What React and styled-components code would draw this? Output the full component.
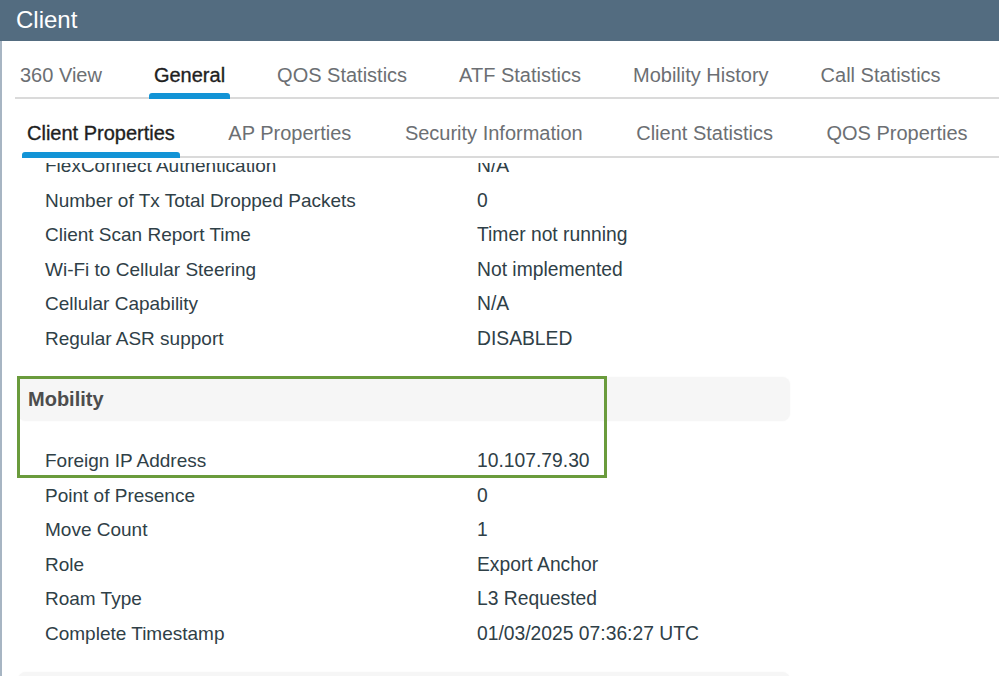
import React from 'react'
import styled, { createGlobalStyle } from 'styled-components'

const GlobalStyle = createGlobalStyle`
  html, body {
    margin: 0;
    padding: 0;
    background: #fff;
  }
  body {
    font-family: "Liberation Sans", Arial, sans-serif;
  }
`;

const Page = styled.div`
  display: flex;
  flex-direction: column;
  height: 676px;
  overflow: hidden;
`;

const TitleBar = styled.div`
  height: 41px;
  flex: none;
  display: flex;
  align-items: center;
  padding-left: 16px;
  background-color: #536c80;
  color: #fff;
  font-size: 24px;
  box-sizing: border-box;
  padding-bottom: 1px;
`;

const Body = styled.div`
  flex: 1;
  display: flex;
  flex-direction: column;
  min-height: 0;
  border-left: 2px solid #a7b5c3;
`;

const TabBar = styled.div`
  display: flex;
  flex: none;
  gap: ${p => p.$gap}px;
  height: ${p => p.$height}px;
  margin-left: ${p => p.$indent}px;
  border-bottom: 2px solid #dadada;
  box-sizing: border-box;
`;

const Tab = styled.div`
  position: relative;
  display: flex;
  align-items: center;
  padding: 12px 5px 0;
  font-size: 20px;
  white-space: nowrap;
  color: ${p => (p.$active ? '#1f1f1f' : '#6c6f73')};
  -webkit-text-stroke: ${p => (p.$active ? '0.35px #1f1f1f' : '0')};

  &::after {
    content: '';
    display: ${p => (p.$active ? 'block' : 'none')};
    position: absolute;
    left: 0;
    right: 0;
    bottom: -2px;
    height: 6px;
    border-radius: 3px 3px 0 0;
    background-color: #1394d6;
  }
`;

const Content = styled.div`
  flex: 1;
  min-height: 0;
  margin-top: 5px;
  overflow: hidden;
`;

const Scroller = styled.div`
  margin-top: -14px;
  padding: 0 0 0 16px;
  width: 772px;
`;

const Section = styled.div`
  position: relative;
  margin-top: ${p => (p.$first ? 0 : 21)}px;
`;

const SectionHeader = styled.div`
  height: 44px;
  display: flex;
  align-items: center;
  padding-left: 10px;
  margin-bottom: 23px;
  border-radius: 8px;
  background-color: #f6f6f6;
  box-shadow: 0 0 2px rgba(0, 0, 0, 0.04);
  color: #4d4d4d;
  font-size: 20px;
  font-weight: bold;
`;

const Row = styled.div`
  display: grid;
  grid-template-columns: 432px 1fr;
  align-items: center;
  height: 34.5px;
  padding-left: 27px;
  font-size: 19px;
  color: #2f4047;
  white-space: nowrap;
`;

const Value = styled.span`
  font-size: 19.3px;
`;

const Highlight = styled.div`
  position: absolute;
  top: -1px;
  left: -1px;
  width: 590px;
  height: 102px;
  box-sizing: border-box;
  border: 3px solid #6a9b3c;
  pointer-events: none;
`;

const topTabs = ['360 View', 'General', 'QOS Statistics', 'ATF Statistics', 'Mobility History', 'Call Statistics'];
const subTabs = ['Client Properties', 'AP Properties', 'Security Information', 'Client Statistics', 'QOS Properties'];

const generalRows = [
  ['FlexConnect Authentication', 'N/A'],
  ['Number of Tx Total Dropped Packets', '0'],
  ['Client Scan Report Time', 'Timer not running'],
  ['Wi-Fi to Cellular Steering', 'Not implemented'],
  ['Cellular Capability', 'N/A'],
  ['Regular ASR support', 'DISABLED'],
];

const mobilityRows = [
  ['Foreign IP Address', '10.107.79.30'],
  ['Point of Presence', '0'],
  ['Move Count', '1'],
  ['Role', 'Export Anchor'],
  ['Roam Type', 'L3 Requested'],
  ['Complete Timestamp', '01/03/2025 07:36:27 UTC'],
];

const Rows = ({ items }) =>
  items.map(([label, value]) => (
    <Row key={label}>
      <span>{label}</span>
      <Value>{value}</Value>
    </Row>
  ));

const App = () => {
  return (
    <>
      <GlobalStyle />
      <Page>
        <TitleBar>Client</TitleBar>
        <Body>
          <TabBar $gap={42} $height={58} $indent={13}>
            {topTabs.map(t => (
              <Tab key={t} $active={t === 'General'}>{t}</Tab>
            ))}
          </TabBar>
          <TabBar $gap={43.5} $height={59} $indent={20}>
            {subTabs.map(t => (
              <Tab key={t} $active={t === 'Client Properties'}>{t}</Tab>
            ))}
          </TabBar>
          <Content>
            <Scroller>
              <Section $first>
                <Rows items={generalRows} />
              </Section>
              <Section>
                <SectionHeader>Mobility</SectionHeader>
                <Rows items={mobilityRows} />
                <Highlight />
              </Section>
              <Section>
                <SectionHeader />
              </Section>
            </Scroller>
          </Content>
        </Body>
      </Page>
    </>
  )
}

export default App
